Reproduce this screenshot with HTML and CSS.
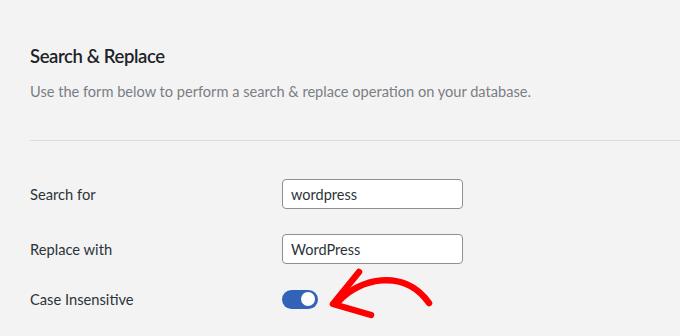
FILE: index.html
```html
<!DOCTYPE html>
<html>
<head>
<meta charset="utf-8">
<link rel="stylesheet" href="styles.css">
</head>
<body>
<div class="page">
  <div class="head">
    <h2 class="title">Search &amp; Replace</h2>
    <p class="desc">Use the form below to perform a search &amp; replace operation on your database.</p>
  </div>
  <div class="divider"></div>
  <div class="form">
    <div class="row">
      <label class="label">Search for</label>
      <div class="field"><input class="input" type="text" value="wordpress"></div>
    </div>
    <div class="row">
      <label class="label">Replace with</label>
      <div class="field"><input class="input" type="text" value="WordPress"></div>
    </div>
    <div class="row row-toggle">
      <label class="label">Case Insensitive</label>
      <div class="field">
        <span class="toggle"><span class="knob"></span></span>
      </div>
    </div>
  </div>
  <svg class="arrow" width="110" height="56" viewBox="0 0 110 56">
    <path d="M10,36 C30,13 76,1 101,37" fill="none" stroke="#ff0000" stroke-width="6.5" stroke-linecap="round"/>
    <path d="M31,6 L5,38 L43,49" fill="none" stroke="#ff0000" stroke-width="6.5" stroke-linecap="round" stroke-linejoin="round"/>
  </svg>
</div>
</body>
</html>
```

FILE: styles.css
```css
html, body {
  margin: 0;
  padding: 0;
}
body {
  background: #f3f3f3;
  font-family: Lato, "Open Sans", sans-serif;
  color: #1d2327;
  width: 680px;
  height: 336px;
  overflow: hidden;
}
.page {
  position: relative;
  width: 680px;
  height: 336px;
}
.head {
  padding: 42px 0 0 30px;
}
.title {
  margin: 0;
  font-size: 18.5px;
  letter-spacing: -0.4px;
  line-height: 28px;
  font-weight: 600;
  color: #1d2327;
}
.desc {
  margin: 11px 0 0 0;
  font-size: 14.6px;
  line-height: 22px;
  color: #7a7e84;
}
.divider {
  margin: 37px 0 0 30px;
  height: 1px;
  background: #dcdcde;
}
.form {
  padding: 38px 0 0 30px;
  display: flex;
  flex-direction: column;
  gap: 25px;
}
.row {
  display: flex;
  align-items: center;
  height: 30px;
}
.row-toggle {
  height: 20px;
}
.label {
  width: 252px;
  font-size: 14.7px;
  color: #2c3338;
}
.field {
  display: flex;
  align-items: center;
}
.input {
  box-sizing: border-box;
  width: 181px;
  height: 30px;
  border: 1px solid #8c8f94;
  border-radius: 4px;
  background: #ffffff;
  padding: 0 8px;
  font-family: Lato, "Open Sans", sans-serif;
  font-size: 14.5px;
  color: #2c3338;
  margin: 0;
  outline: none;
}
.toggle {
  display: flex;
  align-items: center;
  justify-content: flex-end;
  box-sizing: border-box;
  width: 36px;
  height: 19px;
  border-radius: 10px;
  background: #3263b6;
  padding: 0 3px;
}
.knob {
  width: 14px;
  height: 14px;
  border-radius: 50%;
  background: #ffffff;
}
.arrow {
  position: absolute;
  left: 328px;
  top: 266px;
}
```
